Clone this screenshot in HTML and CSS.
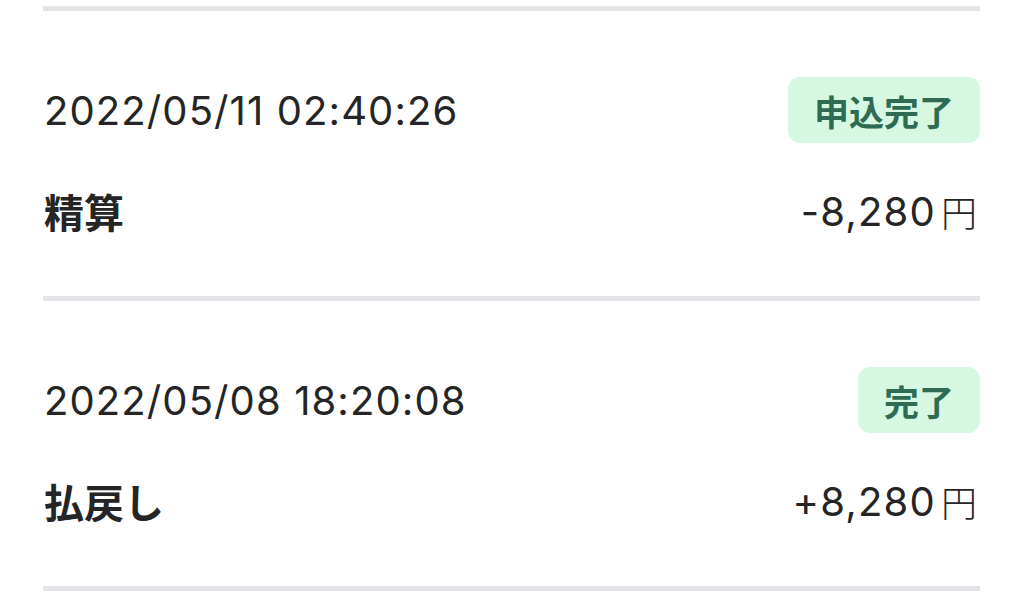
FILE: index.html
```html
<!DOCTYPE html>
<html lang="ja">
<head>
<meta charset="utf-8">
<title>履歴</title>
<link rel="stylesheet" href="styles.css">
</head>
<body>
<div class="list">
  <div class="sep"></div>
  <div class="item">
    <div class="row top">
      <span class="date">2022/05/11 02:40:26</span>
      <span class="badge">申込完了</span>
    </div>
    <div class="row bottom">
      <span class="label">精算</span>
      <span class="amount">-8,280<span class="yen">円</span></span>
    </div>
  </div>
  <div class="sep"></div>
  <div class="item">
    <div class="row top">
      <span class="date">2022/05/08 18:20:08</span>
      <span class="badge">完了</span>
    </div>
    <div class="row bottom">
      <span class="label">払戻し</span>
      <span class="amount">+8,280<span class="yen">円</span></span>
    </div>
  </div>
  <div class="sep"></div>
</div>
</body>
</html>
```

FILE: styles.css
```css
html, body {
  margin: 0;
  padding: 0;
  background: #ffffff;
}

body {
  font-family: Inter, "Noto Sans CJK JP", sans-serif;
  color: #252525;
}

.list {
  display: flex;
  flex-direction: column;
  padding: 6px 44px 0 43px;
}

.sep {
  height: 5px;
  background: #e4e4e8;
}

.item {
  display: flex;
  flex-direction: column;
  gap: 43px;
  padding: 66px 0 60px;
}

.row {
  display: flex;
  align-items: center;
  justify-content: space-between;
}

.top {
  height: 66px;
}

.bottom {
  height: 50px;
}

.date {
  font-size: 40px;
  font-weight: 400;
  letter-spacing: 1.1px;
  padding-left: 1px;
}

.badge {
  height: 66px;
  display: flex;
  align-items: center;
  padding: 0 26px;
  border-radius: 12px;
  background: #d6f8e3;
  color: #2f6b52;
  font-size: 35px;
  font-weight: 700;
}

.label {
  font-size: 40px;
  font-weight: 700;
  padding-left: 1px;
}

.amount {
  font-size: 40px;
  font-weight: 400;
  letter-spacing: 1.2px;
  display: flex;
  align-items: center;
  padding-right: 3px;
}

.yen {
  font-size: 36px;
  font-weight: 300;
  letter-spacing: 0;
  margin-left: 5px;
}
```
